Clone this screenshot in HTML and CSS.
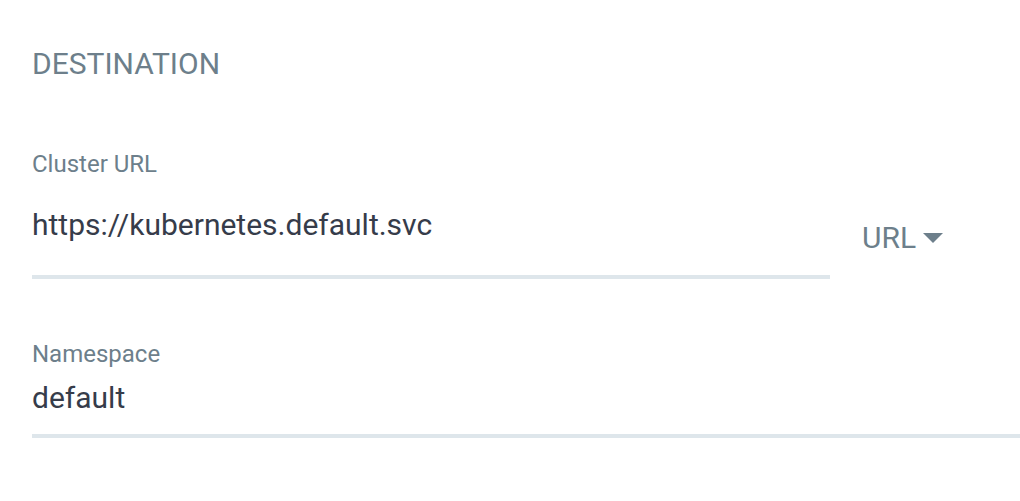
FILE: index.html
```html
<!DOCTYPE html>
<html lang="en">
<head>
    <meta charset="UTF-8">
    <title>Destination</title>
    <link rel="stylesheet" href="styles.css">
</head>
<body>
    <div class="section">
        <h2 class="section-title">DESTINATION</h2>

        <div class="field-row">
            <div class="field field--grow">
                <label class="field-label">Cluster URL</label>
                <div class="field-input field-input--tall">https://kubernetes.default.svc</div>
            </div>
            <div class="dropdown">
                <span>URL</span>
                <svg class="dropdown-caret" width="20" height="10" viewBox="0 0 20 10">
                    <path d="M0 0 L20 0 L10 10 Z" fill="#6d7f8b"/>
                </svg>
            </div>
        </div>

        <div class="field">
            <label class="field-label">Namespace</label>
            <div class="field-input">default</div>
        </div>
    </div>
</body>
</html>
```

FILE: styles.css
```css
* {
    margin: 0;
    padding: 0;
    box-sizing: border-box;
}

body {
    font-family: Roboto, 'Liberation Sans', sans-serif;
    background: #ffffff;
    color: #363c4a;
}

.section {
    padding: 46px 0 0 32px;
}

.section-title {
    font-size: 30px;
    font-weight: 400;
    color: #6d7f8b;
    line-height: 36px;
    margin-bottom: 68px;
}

.field-row {
    display: flex;
    align-items: flex-end;
    margin-bottom: 61px;
}

.field {
    display: flex;
    flex-direction: column;
}

.field--grow {
    width: 798px;
}

.field-label {
    font-size: 24px;
    color: #6d7f8b;
    line-height: 28px;
}

.field-input {
    font-size: 30px;
    line-height: 36px;
    margin-top: 12px;
    padding-bottom: 18px;
    border-bottom: 4px solid #dee6eb;
}

.field-input--tall {
    margin-top: 29px;
    padding-bottom: 32px;
}

.dropdown {
    display: flex;
    align-items: center;
    gap: 7px;
    margin-left: 32px;
    margin-bottom: 25px;
    font-size: 30px;
    line-height: 32px;
    color: #6d7f8b;
}
```
